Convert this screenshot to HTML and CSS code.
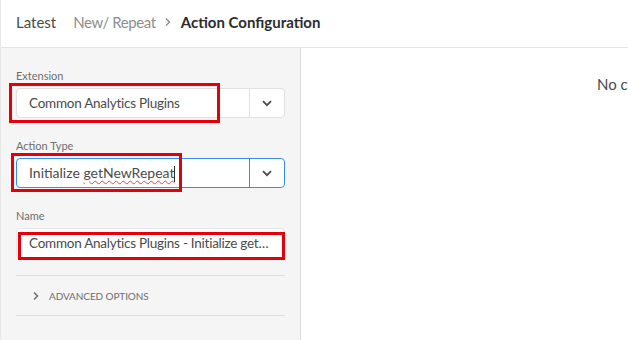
FILE: index.html
```html
<!DOCTYPE html>
<html>
<head>
  <title>Action Configuration</title>
  <link rel="stylesheet" href="styles.css">
</head>
<body>
  <div class="page">
    <div class="header">
      <span class="crumb">Latest</span>
      <span class="crumb crumb-muted">New/ Repeat</span>
      <svg class="crumb-sep" width="8" height="10" viewBox="0 0 8 10"><path d="M2 1.5 L5.5 5 L2 8.5" fill="none" stroke="#8e8e8e" stroke-width="1.4"/></svg>
      <span class="crumb crumb-current">Action Configuration</span>
    </div>

    <div class="main">
      <div class="sidebar">
        <div class="form-group">
          <label>Extension</label>
          <div class="combo">
            <div class="combo-input narrow">Common Analytics Plugins</div>
            <div class="combo-button">
              <svg width="10" height="7" viewBox="0 0 10 7"><path d="M1 1.2 L5 5.2 L9 1.2" fill="none" stroke="#4b4b4b" stroke-width="1.8"/></svg>
            </div>
            <div class="mark mark-ext"></div>
          </div>
        </div>

        <div class="form-group">
          <label>Action Type</label>
          <div class="combo combo-focus">
            <div class="combo-input">Initialize <span class="typo">getNewRepeat</span><span class="caret"></span></div>
            <div class="combo-button">
              <svg width="10" height="7" viewBox="0 0 10 7"><path d="M1 1.2 L5 5.2 L9 1.2" fill="none" stroke="#4b4b4b" stroke-width="1.8"/></svg>
            </div>
            <div class="mark mark-type"></div>
          </div>
        </div>

        <div class="form-group form-group-name">
          <label>Name</label>
          <div class="textfield">
            <div class="textfield-value narrow">Common Analytics Plugins - Initialize getNewRepeat</div>
            <div class="mark mark-name"></div>
          </div>
        </div>

        <div class="advanced">
          <svg width="8" height="10" viewBox="0 0 8 10"><path d="M2 1.5 L5.5 5 L2 8.5" fill="none" stroke="#6e6e6e" stroke-width="1.5"/></svg>
          <span>ADVANCED OPTIONS</span>
        </div>
      </div>

      <div class="content">
        <div class="empty">No configuration necessary.</div>
      </div>
    </div>
  </div>
</body>
</html>
```

FILE: styles.css
```css
/* Action configuration page */
body {
  margin: 0;
  font-family: Lato, "Open Sans", sans-serif;
  color: #4b4b4b;
  background: #ffffff;
}

.page {
  width: 628px;
  height: 340px;
  overflow: hidden;
  border-left: 1px solid #e8e8e8;
  box-sizing: border-box;
}

.header {
  height: 47px;
  border-bottom: 1px solid #e4e4e4;
  display: flex;
  align-items: center;
  padding: 0 0 4px 15px;
  box-sizing: border-box;
  height: 48px;
  font-size: 15px;
}

.crumb {
  color: #4b4b4b;
}

.crumb-muted {
  color: #8e8e8e;
  margin-left: 17px;
  letter-spacing: -0.4px;
}

.crumb-sep {
  margin: 0 9px 0 8px;
}

.crumb-current {
  color: #2c2c2c;
  font-weight: bold;
}

.main {
  display: flex;
  height: 292px;
}

.sidebar {
  width: 300px;
  flex-shrink: 0;
  background: #f5f5f5;
  border-right: 1px solid #dadada;
  padding: 20px 15px 0 15px;
  box-sizing: border-box;
}

.form-group {
  margin-bottom: 20px;
}

.form-group-name {
  margin-bottom: 16px;
}

.form-group label {
  display: block;
  font-size: 11px;
  line-height: 15px;
  color: #6e6e6e;
  margin-bottom: 5px;
}

.combo {
  position: relative;
  display: flex;
  height: 30px;
  border: 1px solid #e1e1e1;
  border-radius: 4px;
  background: #ffffff;
  box-sizing: border-box;
}

.combo-focus {
  border-color: #378ef0;
}

.combo-input {
  flex: 1;
  padding-left: 12px;
  font-size: 14px;
  line-height: 28px;
  color: #4b4b4b;
  white-space: nowrap;
}

.narrow {
  font-size: 13.5px;
  letter-spacing: -0.25px;
}

.combo-button {
  width: 34px;
  border-left: 1px solid #e1e1e1;
  display: flex;
  align-items: center;
  justify-content: center;
}

.combo-focus .combo-button {
  border-left-color: #378ef0;
}

.typo {
  text-decoration: underline wavy #e34850;
  text-decoration-thickness: 1px;
  text-underline-offset: 2px;
}

.caret {
  display: inline-block;
  width: 1px;
  height: 16px;
  background: #2c2c2c;
  vertical-align: middle;
}

.textfield {
  position: relative;
  height: 31px;
  border: 1px solid #e8e8e8;
  border-radius: 4px;
  background: #ffffff;
  box-sizing: border-box;
}

.textfield-value {
  padding: 0 12px;
  line-height: 29px;
  white-space: nowrap;
  overflow: hidden;
  text-overflow: ellipsis;
}

.mark {
  position: absolute;
  border: 3px solid #e3000b;
  box-sizing: border-box;
}

.mark-ext {
  left: -8px;
  top: -6px;
  width: 211px;
  height: 40px;
}

.mark-type {
  left: -6px;
  top: -6px;
  width: 171px;
  height: 39px;
}

.mark-name {
  left: 1px;
  top: 3px;
  width: 267px;
  height: 28px;
}

.advanced {
  border-top: 1px solid #dedede;
  border-bottom: 1px solid #dedede;
  height: 39px;
  display: flex;
  align-items: center;
  padding-left: 16px;
  gap: 9px;
  font-size: 10px;
  letter-spacing: -0.1px;
  color: #6e6e6e;
}

.content {
  flex: 1;
  overflow: hidden;
  position: relative;
}

.empty {
  padding: 27px 0 0 296px;
  font-size: 15px;
  color: #4b4b4b;
  white-space: nowrap;
}
```
